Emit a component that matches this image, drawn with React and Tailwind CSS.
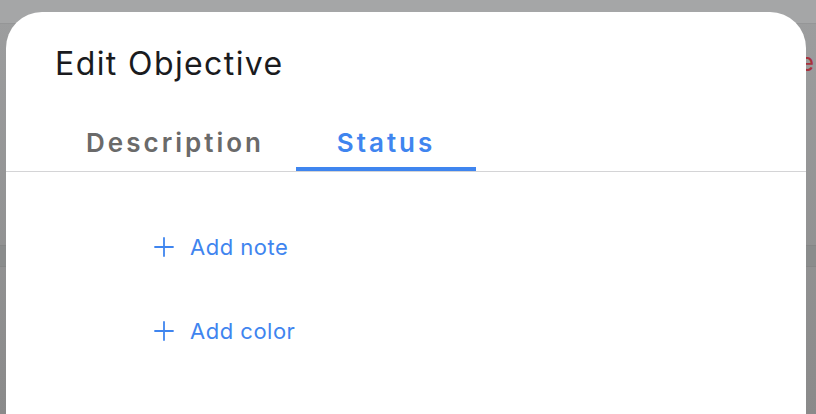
const actions = [{ label: "Add note" }, { label: "Add color" }];

const PlusIcon = () => (
  <svg width="20" height="20" viewBox="0 0 20 20" fill="none" stroke="currentColor" strokeWidth="1.8" strokeLinecap="round">
    <path d="M10 1v18M1 10h18" />
  </svg>
);

const App = () => {
  return (
    <div
      className="relative w-[816px] h-[414px] overflow-hidden bg-gradient-to-b from-[#9d9e9f] to-[#8a8a8a]"
      style={{ fontFamily: "Inter, 'Noto Sans', sans-serif" }}
    >
      {/* dimmed page behind the sheet */}
      <div className="h-[24px] bg-[#a5a6a7] border-b border-[#959697]" />
      <div className="flex justify-end pr-[2px] pt-[26px]">
        <span className="text-[25px] leading-none text-[#a8323c]">Delete</span>
      </div>
      <div className="mt-[170px] h-[22px] border-y border-[#858686] bg-[#8a8c8c]" />

      {/* sheet */}
      <div className="absolute left-[6px] top-[12px] w-[800px] h-[440px] bg-white rounded-[36px]">
        <h1 className="pl-[49px] pt-[33px] text-[32px] leading-[38px] text-[#1a1b1e] tracking-[1.4px]">
          Edit Objective
        </h1>
        <div className="flex gap-[31px] pl-[79px] border-b border-[#d4d4d6]">
          <button className="w-[180px] h-[88px] pt-[44px] flex justify-center items-start text-[26px] leading-[32px] font-semibold tracking-[3px] text-[#6a6a6a]">
            Description
          </button>
          <button className="w-[180px] h-[88px] pt-[44px] flex justify-center items-start text-[26px] leading-[32px] font-semibold tracking-[3px] text-[#3f85ef] border-b-4 border-[#3f85ef] -mb-px">
            Status
          </button>
        </div>
        <div className="pl-[148px] pt-[62px] flex flex-col gap-[58px]">
          {actions.map((a) => (
            <button key={a.label} className="flex items-center gap-[16px] text-[#3f85ef]">
              <PlusIcon />
              <span className="text-[22px] leading-[26px] tracking-[0.5px]">{a.label}</span>
            </button>
          ))}
        </div>
      </div>
    </div>
  );
};

export default App;
